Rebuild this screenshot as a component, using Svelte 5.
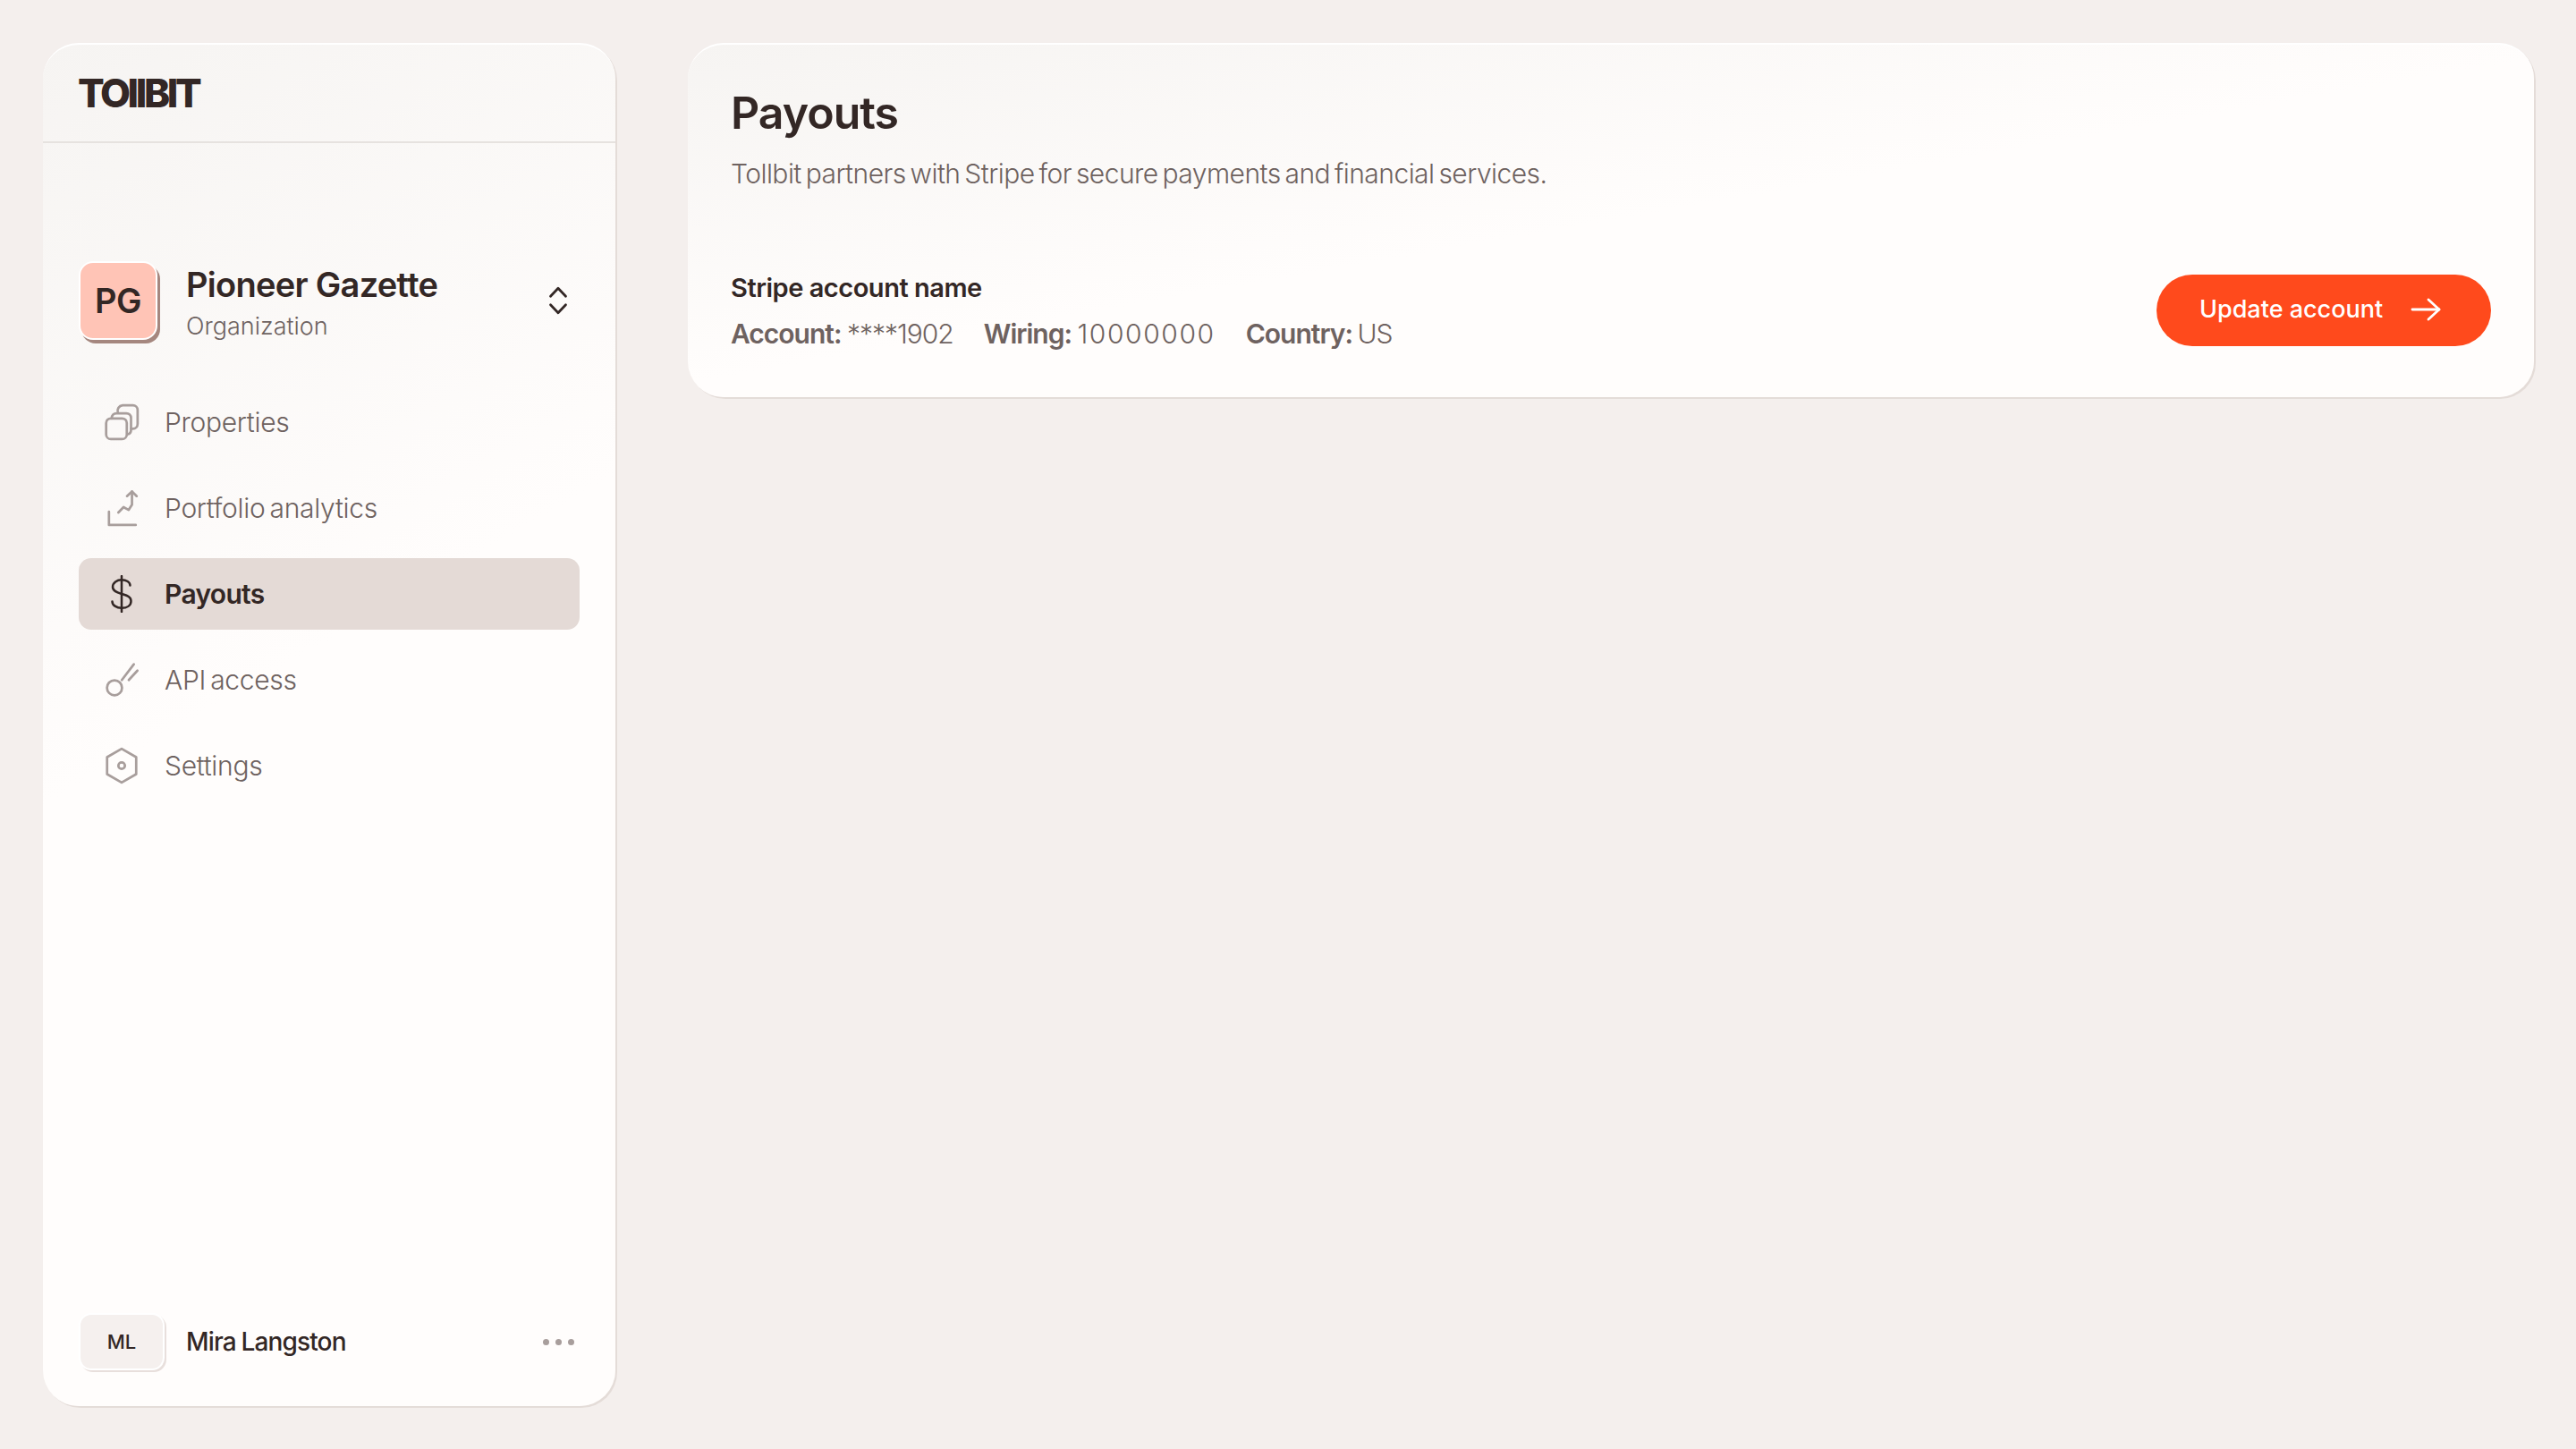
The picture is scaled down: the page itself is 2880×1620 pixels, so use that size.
<script>
  const nav = [
    { id: 'properties', label: 'Properties' },
    { id: 'analytics', label: 'Portfolio analytics' },
    { id: 'payouts', label: 'Payouts', active: true },
    { id: 'api', label: 'API access' },
    { id: 'settings', label: 'Settings' }
  ];
</script>

<div class="page">
  <aside class="sidebar">
    <div class="logo-row"><span class="logo">TOIIBIT</span></div>

    <div class="org">
      <div class="org-avatar">PG</div>
      <div class="org-text">
        <span class="org-name">Pioneer Gazette</span>
        <span class="org-type">Organization</span>
      </div>
      <svg class="chevrons" viewBox="0 0 24 32" fill="none" stroke="currentColor" stroke-width="2.6" stroke-linecap="round" stroke-linejoin="round">
        <path d="M4 11.500 12 3l8 8.500" />
        <path d="M4 20.500 12 29l8-8.500" />
      </svg>
    </div>

    <nav class="nav">
      {#each nav as item}
        <div class="nav-item" class:active={item.active}>
          <svg class="nav-icon" viewBox="0 0 40 40" fill="none" stroke="currentColor" stroke-width={item.active ? 2.4 : 2.6} stroke-linecap="round" stroke-linejoin="round">
            {#if item.id === 'properties'}
              <rect x="3.500" y="16" width="22" height="22" rx="5" />
              <path d="M9.500 16v-.5a5 5 0 0 1 5-5H25a5 5 0 0 1 5 5V28a5 5 0 0 1-4 5" />
              <path d="M16 10a6 6 0 0 1 5-8h11a5 5 0 0 1 5 5v15a5 5 0 0 1-5 5h-2" />
            {:else if item.id === 'analytics'}
              <path d="M6.500 24v14H35" />
              <path d="M16.500 24.700 22 19l5.500 3 3.500-5.500V2.500" />
              <path d="m25.700 7.300 5.300-5 5 5" />
            {:else if item.id === 'payouts'}
              <path d="M20 1v38" />
              <path d="M29 11c0-3.500-4-6-9-6s-9.500 3-9.500 7.500 5 6 9.500 7.500 10 2.500 10 7.500-4.500 7.500-10 7.500-10-3-10-7" />
            {:else if item.id === 'api'}
              <circle cx="12.400" cy="28.500" r="8" />
              <path d="M20.200 20.200 33 3.500" />
              <path d="M27.600 20.200 36.800 10.200" />
            {:else}
              <path d="M20 2 35.500 11v18L20 38 4.500 29V11z" />
              <circle cx="20" cy="20" r="3.500" />
            {/if}
          </svg>
          <span>{item.label}</span>
        </div>
      {/each}
    </nav>

    <div class="user">
      <div class="user-avatar">ML</div>
      <span class="user-name">Mira Langston</span>
      <div class="dots"><i></i><i></i><i></i></div>
    </div>
  </aside>

  <main class="card">
    <h1>Payouts</h1>
    <p class="intro">Tollbit partners with Stripe for secure payments and financial services.</p>
    <div class="account">
      <div class="account-info">
        <div class="account-name">Stripe account name</div>
        <div class="account-meta">
          <span><b>Account:</b> <span class="masked">****1902</span></span>
          <span><b>Wiring:</b> <span class="wiring">10000000</span></span>
          <span class="country"><b>Country:</b> US</span>
        </div>
      </div>
      <button class="update">
        <span class="update-label">Update account</span>
        <svg viewBox="0 0 34 26" fill="none" stroke="currentColor" stroke-width="2.800" stroke-linecap="round" stroke-linejoin="round">
          <path d="M2 13h30" />
          <path d="M20 2l12 11-12 11" />
        </svg>
      </button>
    </div>
  </main>
</div>

<style>
  :global(body) {
    margin: 0;
    background: #f4efed;
    font-family: Inter, "Liberation Sans", sans-serif;
    color: #332725;
  }

  .page {
    display: flex;
    align-items: flex-start;
    gap: 81px;
    padding: 48px 47px 48px 48px;
    height: 1620px;
    box-sizing: border-box;
  }

  .sidebar {
    width: 640px;
    height: 1524px;
    flex-shrink: 0;
    box-sizing: border-box;
    display: flex;
    flex-direction: column;
    border-radius: 40px;
    background: linear-gradient(150deg, #f6f4f2 0%, #fffdfc 45%);
    border-top: 2px solid #fff;
    box-shadow: 2px 2px 0 #e4dcd8;
  }

  .logo-row {
    height: 110px;
    box-sizing: border-box;
    padding: 0 39px;
    display: flex;
    align-items: center;
    border-bottom: 2px solid #e6e2df;
  }
  .logo {
    font-size: 44px;
    font-weight: 800;
    letter-spacing: -3.4px;
  }

  .org {
    display: flex;
    align-items: center;
    margin: 132px 40px 2px 40px;
    height: 88px;
  }
  .org-avatar {
    width: 88px;
    height: 88px;
    flex-shrink: 0;
    display: flex;
    align-items: center;
    justify-content: center;
    box-sizing: border-box;
    border-radius: 16px;
    border: 2px solid #fff;
    background: #ffc4b6;
    box-shadow: 3px 4px 0 #a5877f;
    font-size: 38px;
    font-weight: 600;
    letter-spacing: -0.5px;
  }
  .org-text {
    display: flex;
    flex-direction: column;
    flex: 1;
    margin-left: 32px;
    padding-top: 3px;
    gap: 7px;
  }
  .org-name {
    font-size: 38px;
    font-weight: 600;
    letter-spacing: -0.7px;
  }
  .org-type {
    font-size: 27px;
    font-weight: 300;
    color: #6e6260;
  }
  .chevrons {
    width: 26px;
    height: 34px;
    margin-right: 11px;
  }

  .nav {
    display: flex;
    flex-direction: column;
    gap: 16px;
    margin: 50px 40px 0;
  }
  .nav-item {
    height: 80px;
    display: flex;
    align-items: center;
    gap: 27px;
    padding-left: 27px;
    border-radius: 14px;
    font-size: 30px;
    font-weight: 300;
    letter-spacing: -0.3px;
    word-spacing: -3px;
    color: #6e6260;
  }
  .nav-item.active {
    background: #e4dad6;
    color: #332725;
    font-weight: 600;
    letter-spacing: -0.7px;
  }
  .nav-icon {
    width: 42px;
    height: 42px;
    color: #a89e9c;
  }
  .active .nav-icon {
    color: #332725;
  }

  .user {
    margin: auto 40px 40px 40px;
    display: flex;
    align-items: center;
  }
  .user-avatar {
    width: 96px;
    height: 64px;
    box-sizing: border-box;
    display: flex;
    align-items: center;
    justify-content: center;
    border-radius: 14px;
    border: 2px solid #fff;
    background: #f5f0ee;
    box-shadow: 2px 2px 0 #e8dfdc;
    font-size: 22px;
    font-weight: 500;
  }
  .user-name {
    flex: 1;
    margin-left: 24px;
    font-size: 28px;
    font-weight: 500;
    letter-spacing: -0.85px;
    word-spacing: -1px;
  }
  .dots {
    display: flex;
    gap: 7px;
    margin-right: 6px;
  }
  .dots i {
    width: 7px;
    height: 7px;
    border-radius: 50%;
    background: #a89e9c;
  }

  .card {
    flex: 1;
    height: 396px;
    box-sizing: border-box;
    padding: 46px 48px 0;
    border-radius: 40px;
    background: linear-gradient(170deg, #f6f4f2 0%, #fffdfc 50%);
    border-top: 2px solid #fff;
    box-shadow: 2px 2px 0 #e4dcd8;
  }
  h1 {
    margin: 0;
    font-size: 50px;
    line-height: 60px;
    font-weight: 600;
    letter-spacing: -1px;
  }
  .intro {
    margin: 18px 0 0;
    font-size: 30px;
    line-height: 40px;
    font-weight: 300;
    letter-spacing: -0.54px;
    word-spacing: -3px;
    color: #6e6260;
  }
  .account {
    display: flex;
    align-items: center;
    justify-content: space-between;
    margin-top: 88px;
  }
  .account-name {
    font-size: 29px;
    line-height: 40px;
    font-weight: 600;
    letter-spacing: -0.48px;
  }
  .account-meta {
    display: flex;
    gap: 34px;
    margin-top: 11px;
    font-size: 30px;
    line-height: 40px;
    font-weight: 300;
    word-spacing: -2px;
    color: #6e6260;
  }
  .account-meta b {
    font-weight: 600;
    letter-spacing: -1px;
  }
  .masked {
    letter-spacing: -1px;
  }
  .wiring {
    letter-spacing: 1.6px;
  }
  .country {
    letter-spacing: -1px;
  }
  .update {
    width: 374px;
    height: 80px;
    display: flex;
    align-items: center;
    gap: 31px;
    margin-bottom: 2px;
    padding: 0 0 2px 48px;
    border: none;
    border-radius: 40px;
    background: #ff4a1c;
    color: #fff;
    font-family: inherit;
    font-size: 27px;
    font-weight: 500;
  }
  .update svg {
    width: 34px;
    height: 26px;
  }
</style>
